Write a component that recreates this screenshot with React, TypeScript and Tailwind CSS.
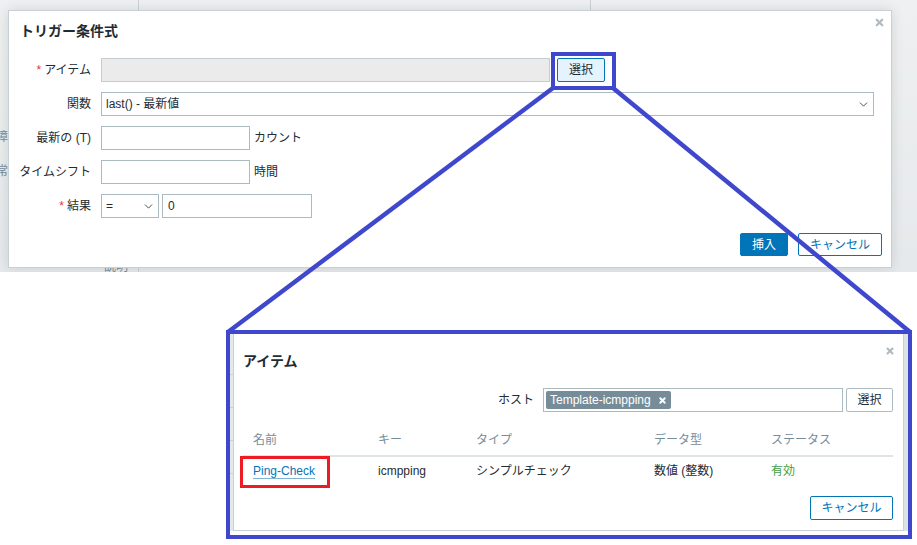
import { ChevronDown, X } from "lucide-react";

const font = "font-['Liberation_Sans','Noto_Sans_CJK_JP',sans-serif]";

function Label({ text, required }: { text: string; required?: boolean }) {
  return (
    <div className="w-[82px] shrink-0 text-right text-[12px] text-[#1f2c33]">
      {required && <span className="mr-[3px] text-[#e33734]">*</span>}
      {text}
    </div>
  );
}

function SelectBox({ value, className }: { value: string; className: string }) {
  return (
    <div
      className={
        "flex h-[24px] items-center justify-between border border-[#acbbc2] bg-white pl-[4px] pr-[3px] text-[12px] text-[#1f2c33] " +
        className
      }
    >
      <span>{value}</span>
      <ChevronDown className="h-[13px] w-[13px] text-[#1f2c33]" strokeWidth={1.5} />
    </div>
  );
}

function TriggerDialog() {
  return (
    <div className="relative z-10 ml-[8px] mt-[10px] flex h-[258px] w-[884px] flex-col border border-[#c7d0d4] bg-white shadow-[0_0_12px_rgba(0,0,0,0.12)]">
      <X className="absolute right-[6px] top-[6px] h-[11px] w-[11px] text-[#b0bac0]" strokeWidth={5} />
      <div className="pl-[11px] pt-[11px] text-[14px] font-bold leading-[18px] text-[#1f2c33]">
        トリガー条件式
      </div>
      <div className="mt-[18px] flex flex-col gap-[10px]">
        <div className="flex h-[24px] items-center">
          <Label text="アイテム" required />
          <div className="ml-[10px] h-[24px] w-[449px] border border-[#c4ccd1] bg-[#ebebeb]" />
          <button className="ml-[7px] h-[24px] w-[48px] rounded-[2px] border border-[#0275b8] bg-[#e5f3fd] text-[12px] text-[#1f2c33]">
            選択
          </button>
        </div>
        <div className="flex h-[24px] items-center">
          <Label text="関数" />
          <SelectBox value="last() - 最新値" className="ml-[10px] w-[773px]" />
        </div>
        <div className="flex h-[24px] items-center">
          <Label text="最新の (T)" />
          <div className="ml-[10px] h-[24px] w-[149px] border border-[#acbbc2] bg-white" />
          <span className="ml-[4px] text-[12px] text-[#1f2c33]">カウント</span>
        </div>
        <div className="flex h-[24px] items-center">
          <Label text="タイムシフト" />
          <div className="ml-[10px] h-[24px] w-[149px] border border-[#acbbc2] bg-white" />
          <span className="ml-[4px] text-[12px] text-[#1f2c33]">時間</span>
        </div>
        <div className="flex h-[24px] items-center">
          <Label text="結果" required />
          <SelectBox value="=" className="ml-[10px] w-[58px]" />
          <div className="ml-[3px] flex h-[24px] w-[150px] items-center border border-[#acbbc2] bg-white pl-[5px] text-[12px] text-[#1f2c33]">
            0
          </div>
        </div>
      </div>
      <div className="mt-[15px] flex justify-end gap-[10px] pr-[9px]">
        <button className="h-[23px] w-[48px] rounded-[2px] border border-[#0275b8] bg-[#0275b8] text-[12px] text-white">
          挿入
        </button>
        <button className="h-[23px] w-[84px] rounded-[2px] border border-[#0275b8] bg-white text-[12px] text-[#0275b8]">
          キャンセル
        </button>
      </div>
    </div>
  );
}

function ItemDialog() {
  const cols = ["w-[125px]", "w-[98px]", "w-[178px]", "w-[117px]", "flex-1"];
  const head = ["名前", "キー", "タイプ", "データ型", "ステータス"];
  return (
    <div className="ml-[226px] mt-[58px] flex h-[209px] w-[686px] flex-col border-[4px] border-[#3f48cc] bg-white">
      <div className="flex flex-1">
        <div className="flex w-[3px] flex-col gap-[32px] bg-[#e4e8ea] pt-[40px]">
          <div className="h-px bg-[#c9d1d5]" />
          <div className="h-px bg-[#c9d1d5]" />
          <div className="h-px bg-[#c9d1d5]" />
          <div className="h-px bg-[#c9d1d5]" />
        </div>
        <div className="relative flex flex-1 flex-col border-x border-b border-[#c7d0d4] bg-white pl-[9px] pr-[10px]">
          <X className="absolute right-[8px] top-[12px] h-[10px] w-[10px] text-[#b0bac0]" strokeWidth={5} />
          <div className="pt-[18px] text-[14px] font-bold leading-[18px] text-[#1f2c33]">アイテム</div>
          <div className="mt-[18px] flex h-[24px] items-center justify-end">
            <span className="text-[12px] text-[#1f2c33]">ホスト</span>
            <div className="ml-[9px] flex h-[24px] w-[300px] items-center border border-[#acbbc2] bg-white pl-[2px]">
              <span className="flex h-[18px] items-center gap-[7px] rounded-[2px] bg-[#768d99] px-[4px] text-[12px] text-white">
                Template-icmpping
                <X className="h-[9px] w-[9px]" strokeWidth={5} />
              </span>
            </div>
            <button className="ml-[3px] h-[24px] w-[47px] rounded-[2px] border border-[#acbbc2] bg-white text-[12px] text-[#1f2c33]">
              選択
            </button>
          </div>
          <div className="mt-[13px] flex h-[32px] items-center border-b-2 border-[#dfe4e7] text-[12px] text-[#768d99]">
            {head.map((h, i) => (
              <div key={h} className={cols[i] + " pl-[10px]"}>
                {h}
              </div>
            ))}
          </div>
          <div className="flex h-[28px] items-center text-[12px] text-[#1f2c33]">
            <div className={cols[0] + " pl-[10px]"}>
              <span className="border-b border-[#7fb3d5] text-[#0275b8]">Ping-Check</span>
            </div>
            <div className={cols[1] + " pl-[10px]"}>icmpping</div>
            <div className={cols[2] + " pl-[10px]"}>シンプルチェック</div>
            <div className={cols[3] + " pl-[10px]"}>数値 (整数)</div>
            <div className={cols[4] + " pl-[10px] text-[#429e47]"}>有効</div>
          </div>
          <div className="mt-[11px] flex justify-end">
            <button className="h-[24px] w-[83px] rounded-[2px] border border-[#0275b8] bg-white text-[12px] text-[#0275b8]">
              キャンセル
            </button>
          </div>
        </div>
        <div className="w-[4px] bg-[#dde2e5]" />
      </div>
      <div className="h-[4px] bg-white" />
    </div>
  );
}

export default function App() {
  return (
    <div className={"relative h-[545px] w-[917px] overflow-hidden bg-white " + font}>
      <div className="relative h-[272px] overflow-hidden bg-gradient-to-b from-[#eef0f1] to-[#e6e9eb] pt-px">
        <div className="absolute left-[138px] top-0 h-[10px] w-px bg-[#c9d1d5]" />
        <div className="absolute left-[590px] top-0 h-[10px] w-px bg-[#c9d1d5]" />
        <div className="absolute left-[138px] top-[264px] h-[8px] w-px bg-[#c9d1d5]" />
        <span className="absolute left-[-4px] top-[128px] text-[12px] text-[#768d99]">障</span>
        <span className="absolute left-[-4px] top-[162px] text-[12px] text-[#768d99]">常</span>
        <span className="absolute left-[104px] top-[258px] text-[12px] text-[#768d99]">説明</span>
        <div className="-mt-px">
          <TriggerDialog />
        </div>
      </div>
      <ItemDialog />

      <div className="pointer-events-none absolute left-[551px] top-[52px] z-20 h-[38px] w-[65px] border-[4px] border-[#3f48cc]" />
      <div className="pointer-events-none absolute left-[240px] top-[456px] z-20 h-[32px] w-[90px] border-[3px] border-[#ed1c24]" />
      <svg className="pointer-events-none absolute inset-0 z-20" width="917" height="545">
        <line x1="553" y1="88" x2="228" y2="332" stroke="#3f48cc" strokeWidth="4.5" />
        <line x1="613" y1="88" x2="910" y2="332" stroke="#3f48cc" strokeWidth="4.5" />
      </svg>
    </div>
  );
}
